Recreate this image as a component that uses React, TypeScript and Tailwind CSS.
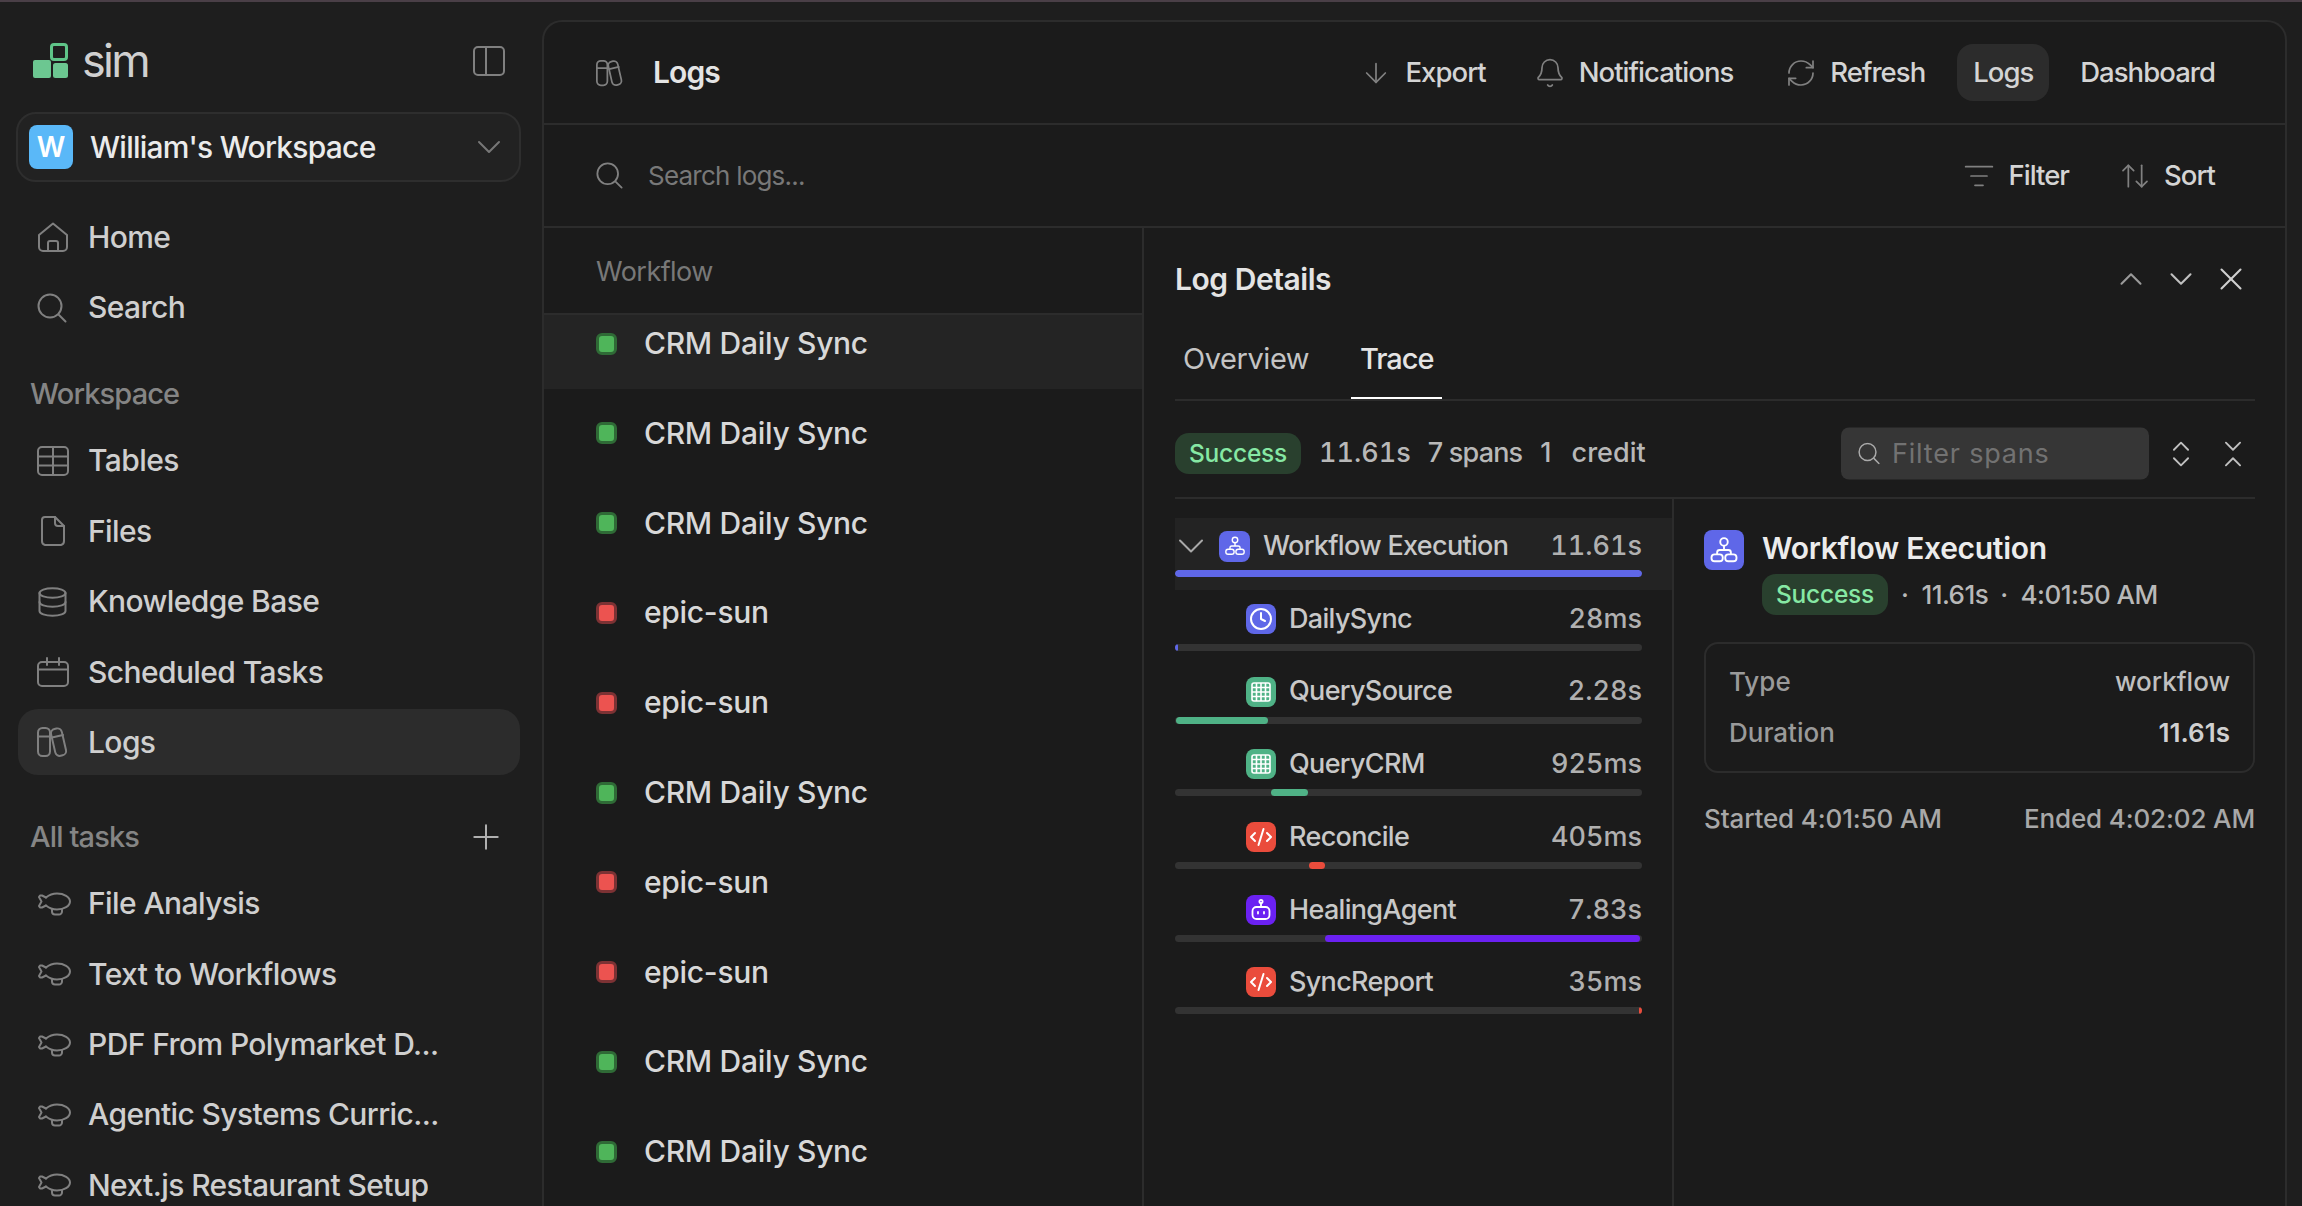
import {
  ArrowDown,
  ArrowUpDown,
  Bell,
  ChevronDown,
  ChevronUp,
  ChevronsDownUp,
  ChevronsUpDown,
  Clock,
  CodeXml,
  ListFilter,
  Plus,
  RefreshCw,
  X,
} from 'lucide-react';
import type { ReactNode } from 'react';

function Logo() {
  return (
    <svg width="35" height="35" viewBox="0 0 35 35" className="shrink-0">
      <rect x="0" y="17" width="18" height="18" rx="2" fill="#6cc791" />
      <rect x="20" y="20" width="15" height="15" rx="2.5" fill="#6cc791" />
      <rect x="18.5" y="1.5" width="15" height="15" rx="2.5" fill="none" stroke="#5fc488" strokeWidth="3" />
    </svg>
  );
}

const lineIcon = { fill: 'none', stroke: '#808080', strokeWidth: 2, strokeLinecap: 'round', strokeLinejoin: 'round' } as const;

function PanelIcon() {
  return (
    <svg width="32" height="30" viewBox="0 0 32 30" {...lineIcon}>
      <rect x="1" y="1" width="30" height="28" rx="4" />
      <path d="M13 1v28" />
    </svg>
  );
}

function HomeIcon() {
  return (
    <svg width="32" height="30" viewBox="0 0 32 30" {...lineIcon}>
      <path d="M2 13 16 1.5 30 13v12a4 4 0 0 1-4 4H6a4 4 0 0 1-4-4Z" />
      <path d="M11 29v-8a2 2 0 0 1 2-2h6a2 2 0 0 1 2 2v8" />
    </svg>
  );
}

function SearchIcon({ size = 30, color = '#808080' }: { size?: number; color?: string }) {
  return (
    <svg width={size} height={size} viewBox="0 0 30 30" {...lineIcon} stroke={color}>
      <circle cx="13" cy="13" r="11.5" />
      <path d="m22 22 6.5 6.5" />
    </svg>
  );
}

function TableIcon() {
  return (
    <svg width="32" height="30" viewBox="0 0 32 30" {...lineIcon}>
      <rect x="1" y="1" width="30" height="28" rx="4" />
      <path d="M16 1v28M1 10.5h30M1 19.5h30" />
    </svg>
  );
}

function FileIcon() {
  return (
    <svg width="32" height="30" viewBox="0 0 32 30" {...lineIcon}>
      <path d="M8 1h10l9 9v15a4 4 0 0 1-3 4H8a4 4 0 0 1-3-4V4a3 3 0 0 1 3-3Z" />
      <path d="M18 1v6a3 3 0 0 0 3 3h6" />
    </svg>
  );
}

function DatabaseIcon() {
  return (
    <svg width="32" height="30" viewBox="0 0 32 30" {...lineIcon}>
      <ellipse cx="15.5" cy="6" rx="13" ry="4.8" />
      <path d="M2.5 6v18c0 2.7 5.8 4.8 13 4.8s13-2.1 13-4.8V6" />
      <path d="M2.5 15c0 2.7 5.8 4.8 13 4.8s13-2.1 13-4.8" />
    </svg>
  );
}

function CalendarIcon() {
  return (
    <svg width="32" height="30" viewBox="0 0 32 30" {...lineIcon}>
      <rect x="1" y="5" width="30" height="24" rx="4" />
      <path d="M1 12.5h30M10 1v7M22 1v7" />
    </svg>
  );
}

function LogsIcon({ size = 32 }: { size?: number }) {
  return (
    <svg width={size} height={size} viewBox="0 0 32 32" {...lineIcon}>
      <rect x="1" y="2" width="12" height="28" rx="4.5" />
      <path d="M1 10.5h12" />
      <rect x="16" y="2.5" width="11" height="27.5" rx="4.5" transform="rotate(-13 21 16)" />
      <path d="M15 11.5l11-2.5" />
    </svg>
  );
}

function AirshipIcon() {
  return (
    <svg width="34" height="24" viewBox="0 0 34 24" {...lineIcon}>
      <path d="M9 5.5C12 3 16 1.5 20 1.5c7 0 13 3.5 13 8s-6 8-13 8c-4 0-8-1.500-11-4" />
      <path d="M9 5.500 5 3.500H3L2 5l2.500 4.500L2 14l1 1.500h2l4-2" />
      <path d="M15 17.500v2a3 3 0 0 0 3 3h4a3 3 0 0 0 3-3v-2" />
    </svg>
  );
}

function WorkflowGlyph({ size }: { size: number }) {
  return (
    <svg width={size} height={size} viewBox="0 0 24 24" fill="none" stroke="currentColor" strokeWidth="1.5">
      <circle cx="12" cy="5.500" r="3" />
      <path d="M12 8.500v3.500M6.500 15.500V14a2 2 0 0 1 2-2h7a2 2 0 0 1 2 2v1.500" />
      <rect x="2" y="15.500" width="9" height="5.500" rx="2.500" />
      <rect x="13" y="15.500" width="9" height="5.500" rx="2.500" />
    </svg>
  );
}

function TableGlyph() {
  return (
    <svg width="24" height="24" viewBox="0 0 24 24" fill="none" stroke="currentColor" strokeWidth="1.6">
      <rect x="3" y="3" width="18" height="18" rx="2" />
      <path d="M7.500 3v18M12 3v18M16.500 3v18M3 7.500h18M3 12h18M3 16.500h18" />
    </svg>
  );
}

function BotGlyph() {
  return (
    <svg width="24" height="24" viewBox="0 0 24 24" fill="none" stroke="currentColor" strokeWidth="1.8" strokeLinecap="round">
      <circle cx="12" cy="3.500" r="1.600" />
      <path d="M12 5.200V9" />
      <rect x="3.500" y="9" width="17" height="12" rx="4" />
      <path d="M9 14v1.500M15 14v1.500" />
    </svg>
  );
}

function NavRow({ icon, label, active }: { icon: ReactNode; label: string; active?: boolean }) {
  return (
    <div
      className={`ml-[18px] mr-[22px] my-[2.2px] flex h-[66px] shrink-0 items-center rounded-[20px] pl-[19px] ${active ? 'bg-[#2c2c2c]' : ''}`}
    >
      <span className="flex w-[51px] shrink-0 items-center">{icon}</span>
      <span className="truncate text-[30px] font-medium tracking-[-0.02em] text-[#cfcfcf]">{label}</span>
    </div>
  );
}

function SectionLabel({ children }: { children: ReactNode }) {
  return <span className="text-[29px] font-medium tracking-[-0.03em] text-[#858585]">{children}</span>;
}

const navIcon = 'text-[#808080]';

const logRows = [
  { name: 'CRM Daily Sync', ok: true },
  { name: 'CRM Daily Sync', ok: true },
  { name: 'CRM Daily Sync', ok: true },
  { name: 'epic-sun', ok: false },
  { name: 'epic-sun', ok: false },
  { name: 'CRM Daily Sync', ok: true },
  { name: 'epic-sun', ok: false },
  { name: 'epic-sun', ok: false },
  { name: 'CRM Daily Sync', ok: true },
  { name: 'CRM Daily Sync', ok: true },
];

function StatusDot({ ok }: { ok: boolean }) {
  return (
    <span
      className={`h-[22px] w-[21px] shrink-0 rounded-[6px] border-[3px] ${
        ok ? 'border-[#2f6a36] bg-[#4fb55a]' : 'border-[#7c3234] bg-[#ec5350]'
      }`}
    />
  );
}

const actionText = 'text-[27.5px] font-medium tracking-[-0.035em] text-[#d4d4d4]';

function HeaderAction({ icon, label }: { icon: ReactNode; label: string }) {
  return (
    <div className="flex items-center gap-[13px]">
      {icon}
      <span className={actionText}>{label}</span>
    </div>
  );
}

function SuccessPill() {
  return (
    <span className="flex h-[41px] w-[126px] shrink-0 items-center justify-center rounded-[14px] bg-[#29402e] text-[24.5px] font-medium tracking-[-0.01em] text-[#86e8a4]">
      Success
    </span>
  );
}

function SpanIcon({ color, children, size = 31 }: { color: string; children: ReactNode; size?: number }) {
  return (
    <span
      className="flex shrink-0 items-center justify-center rounded-[8px] text-white"
      style={{ backgroundColor: color, width: size, height: size }}
    >
      {children}
    </span>
  );
}

const spans = [
  { name: 'DailySync', time: '28ms', color: '#5f67e8', left: 0, width: 0.6, icon: <Clock size={24} strokeWidth={2} /> },
  { name: 'QuerySource', time: '2.28s', color: '#4fb286', left: 0.3, width: 19.6, icon: <TableGlyph /> },
  { name: 'QueryCRM', time: '925ms', color: '#4fb286', left: 20.6, width: 7.9, icon: <TableGlyph /> },
  { name: 'Reconcile', time: '405ms', color: '#ea4c3c', left: 28.7, width: 3.4, icon: <CodeXml size={24} strokeWidth={2} /> },
  { name: 'HealingAgent', time: '7.83s', color: '#6b21f2', left: 32.1, width: 67.4, icon: <BotGlyph /> },
  { name: 'SyncReport', time: '35ms', color: '#ea4c3c', left: 99.4, width: 0.6, icon: <CodeXml size={24} strokeWidth={2} /> },
];

function TraceBar({ color, left, width }: { color: string; left: number; width: number }) {
  return (
    <div className="h-[7px] w-[467px] overflow-hidden rounded-full bg-[#333333]">
      <div className="h-full rounded-full" style={{ backgroundColor: color, marginLeft: `${left}%`, width: `${width}%` }} />
    </div>
  );
}

const durationText = 'ml-auto text-[27px] font-medium tabular-nums text-[#b0b0b0]';
const spanName = 'text-[27px] font-medium tracking-[-0.025em] text-[#c8c8c8]';

export default function App() {
  return (
    <div className="flex h-[1206px] flex-col overflow-hidden bg-[#1e1e1e] [font-family:Inter,sans-serif]">
      <div className="h-[2px] shrink-0 bg-[#4a3f47]" />
      <div className="flex min-h-0 flex-1">
        <aside className="flex w-[542px] shrink-0 flex-col overflow-hidden">
          <div className="flex h-[110px] shrink-0 items-center pb-[2px] pl-[33px] pr-[37px] pt-[9px]">
            <Logo />
            <span className="ml-[14px] text-[45px] leading-none tracking-[-0.06em] text-[#d0d0d0]">sim</span>
            <span className="ml-auto">
              <PanelIcon />
            </span>
          </div>
          <div className="ml-[16px] mr-[21px] flex h-[70px] shrink-0 items-center rounded-[20px] border-2 border-[#2e2e2e] bg-[#222222] pl-[11px] pr-[10px]">
            <span className="flex h-[44px] w-[44px] items-center justify-center rounded-[8px] bg-[#5ab8f8] text-[28px] font-semibold text-white">
              W
            </span>
            <span className="ml-[17px] text-[30px] font-medium tracking-[-0.025em] text-[#ebebeb]">William's Workspace</span>
            <ChevronDown className="ml-auto text-[#777777]" size={40} strokeWidth={1.2} />
          </div>
          <div className="mt-[20px] flex shrink-0 flex-col">
            <NavRow icon={<HomeIcon />} label="Home" />
            <NavRow icon={<SearchIcon />} label="Search" />
          </div>
          <div className="flex h-[83px] shrink-0 items-center pl-[30px] pt-[18px]">
            <SectionLabel>Workspace</SectionLabel>
          </div>
          <div className="flex shrink-0 flex-col">
            <NavRow icon={<TableIcon />} label="Tables" />
            <NavRow icon={<FileIcon />} label="Files" />
            <NavRow icon={<DatabaseIcon />} label="Knowledge Base" />
            <NavRow icon={<CalendarIcon />} label="Scheduled Tasks" />
            <NavRow icon={<LogsIcon />} label="Logs" active />
          </div>
          <div className="flex h-[91px] shrink-0 items-center pl-[30px] pr-[36px] pt-[27px]">
            <SectionLabel>All tasks</SectionLabel>
            <Plus className="ml-auto text-[#b0b0b0]" size={40} strokeWidth={1.2} />
          </div>
          <div className="flex shrink-0 flex-col">
            <NavRow icon={<AirshipIcon />} label="File Analysis" />
            <NavRow icon={<AirshipIcon />} label="Text to Workflows" />
            <NavRow icon={<AirshipIcon />} label="PDF From Polymarket D..." />
            <NavRow icon={<AirshipIcon />} label="Agentic Systems Curric..." />
            <NavRow icon={<AirshipIcon />} label="Next.js Restaurant Setup" />
          </div>
        </aside>

        <main className="mr-[15px] mt-[18px] flex min-w-0 flex-1 flex-col overflow-hidden rounded-t-[20px] border-x-2 border-t-2 border-[#2c2c2c] bg-[#1b1b1b]">
          <header className="flex h-[103px] shrink-0 items-center border-b-2 border-[#2c2c2c] pl-[52px] pr-[70px]">
            <LogsIcon size={28} />
            <span className="ml-[29px] text-[30px] font-semibold tracking-[-0.03em] text-[#e4e4e4]">Logs</span>
            <div className="ml-auto flex items-center">
              <HeaderAction icon={<ArrowDown className={navIcon} size={32} strokeWidth={1.3} />} label="Export" />
              <div className="ml-[48px]">
                <HeaderAction icon={<Bell className={navIcon} size={32} strokeWidth={1.3} />} label="Notifications" />
              </div>
              <div className="ml-[52px]">
                <HeaderAction icon={<RefreshCw className={navIcon} size={32} strokeWidth={1.3} />} label="Refresh" />
              </div>
              <span className={`ml-[32px] flex h-[57px] w-[92px] items-center justify-center rounded-[16px] bg-[#2c2c2c] ${actionText}`}>
                Logs
              </span>
              <span className={`ml-[31px] ${actionText}`}>Dashboard</span>
            </div>
          </header>

          <div className="flex h-[103px] shrink-0 items-center border-b-2 border-[#2c2c2c] pl-[52px] pr-[70px]">
            <SearchIcon size={27} />
            <span className="ml-[25px] text-[26px] tracking-[-0.03em] text-[#787878]">Search logs...</span>
            <div className="ml-auto flex items-center gap-[50px]">
              <HeaderAction icon={<ListFilter className={navIcon} size={32} strokeWidth={1.3} />} label="Filter" />
              <HeaderAction icon={<ArrowUpDown className={navIcon} size={32} strokeWidth={1.3} />} label="Sort" />
            </div>
          </div>

          <div className="flex min-h-0 flex-1">
            <section className="flex w-[600px] shrink-0 flex-col border-r-2 border-[#2c2c2c]">
              <div className="flex h-[87px] shrink-0 items-center border-b-2 border-[#2c2c2c] pl-[52px] pt-[4px]">
                <span className="text-[27px] tracking-[-0.02em] text-[#787878]">Workflow</span>
              </div>
              {logRows.map((row, i) => (
                <div
                  key={i}
                  className={`flex shrink-0 items-center gap-[27px] pl-[52px] ${i === 0 ? 'h-[73.5px] bg-[#242424] pb-[16.5px]' : 'h-[89.8px]'}`}
                >
                  <StatusDot ok={row.ok} />
                  <span className="text-[30px] font-medium tracking-[-0.01em] text-[#d8d8d8]">{row.name}</span>
                </div>
              ))}
            </section>

            <section className="flex min-w-0 flex-1 flex-col pl-[31px] pr-[30px]">
              <div className="flex h-[105px] shrink-0 items-center pb-[5px] pt-[2px]">
                <span className="text-[30px] font-semibold tracking-[-0.015em] text-[#e4e4e4]">Log Details</span>
                <div className="ml-auto flex items-center gap-[12px] pr-[5px]">
                  <ChevronUp className="text-[#9a9a9a]" size={38} strokeWidth={1.3} />
                  <ChevronDown className="text-[#c0c0c0]" size={38} strokeWidth={1.3} />
                  <X className="text-[#d0d0d0]" size={38} strokeWidth={1.3} />
                </div>
              </div>
              <div className="flex h-[68px] shrink-0 items-stretch gap-[42px] border-b-2 border-[#2c2c2c] pl-[8px]">
                <span className="flex items-center pb-[14px] text-[29px] tracking-[-0.015em] text-[#c4c4c4]">Overview</span>
                <span className="flex w-[91px] items-center justify-center border-b-[2px] border-white pb-[12px] text-[29px] font-medium tracking-[-0.035em] text-[#e4e4e4]">
                  Trace
                </span>
              </div>
              <div className="flex h-[98px] shrink-0 items-center border-b-2 border-[#2c2c2c] pt-[9px]">
                <SuccessPill />
                <span className="ml-[18px] text-[27px] font-medium tabular-nums text-[#b8b8b8]">11.61s</span>
                <span className="ml-[17px] text-[27px] font-medium tracking-[-0.03em] text-[#b8b8b8]">7 spans</span>
                <span className="ml-[18px] text-[27px] font-medium text-[#b8b8b8]">1</span>
                <span className="ml-[20px] text-[27px] font-medium text-[#b8b8b8]">credit</span>
                <div className="ml-auto -mt-[9px] flex h-[52px] w-[308px] translate-y-[4.5px] items-center rounded-[8px] bg-[#363636] pl-[17px]">
                  <SearchIcon size={22} color="#aaaaaa" />
                  <span className="ml-[12px] text-[27px] tracking-[0.03em] text-[#727272]">Filter spans</span>
                </div>
                <ChevronsUpDown className="ml-[15px] text-[#c0c0c0]" size={34} strokeWidth={1.3} />
                <ChevronsDownUp className="ml-[18px] mr-[5px] text-[#c0c0c0]" size={34} strokeWidth={1.3} />
              </div>

              <div className="flex min-h-0 flex-1">
                <div className="flex w-[499px] shrink-0 flex-col border-r-2 border-[#2c2c2c] pt-[19px]">
                  <div className="h-[72px] shrink-0 bg-[#232323]">
                    <div className="flex h-[52px] items-center pr-[30px] pt-[4px]">
                      <ChevronDown className="-ml-[6px] text-[#a8a8a8]" size={44} strokeWidth={1.1} />
                      <span className="ml-[6px]">
                        <SpanIcon color="#5f67e8">
                          <WorkflowGlyph size={22} />
                        </SpanIcon>
                      </span>
                      <span className={`ml-[13px] ${spanName}`}>Workflow Execution</span>
                      <span className={durationText}>11.61s</span>
                    </div>
                    <TraceBar color="#5f67e8" left={0} width={100} />
                  </div>
                  {spans.map((s) => (
                    <div key={s.name} className="flex h-[72.7px] shrink-0 flex-col justify-start pt-[13px]">
                      <div className="flex h-[32px] items-center pl-[71px] pr-[30px]">
                        <SpanIcon color={s.color} size={30}>
                          {s.icon}
                        </SpanIcon>
                        <span className={`ml-[13px] ${spanName}`}>{s.name}</span>
                        <span className={durationText}>{s.time}</span>
                      </div>
                      <div className="mt-[9px]">
                        <TraceBar color={s.color} left={s.left} width={s.width} />
                      </div>
                    </div>
                  ))}
                </div>

                <div className="flex min-w-0 flex-1 flex-col pl-[30px] pt-[31px]">
                  <div className="flex shrink-0 gap-[18px]">
                    <SpanIcon color="#5f67e8" size={40}>
                      <WorkflowGlyph size={30} />
                    </SpanIcon>
                    <div className="flex flex-col">
                      <span className="h-[44px] text-[30px] font-semibold leading-[36px] tracking-[-0.01em] text-[#ececec]">
                        Workflow Execution
                      </span>
                      <div className="flex items-center text-[26px] font-medium tracking-[-0.02em] text-[#b8b8b8]">
                        <SuccessPill />
                        <span className="ml-[13px]">·</span>
                        <span className="ml-[13px]">11.61s</span>
                        <span className="ml-[12px]">·</span>
                        <span className="ml-[13px]">4:01:50 AM</span>
                      </div>
                    </div>
                  </div>
                  <div className="mt-[27px] flex h-[131px] shrink-0 flex-col justify-center gap-[21px] rounded-[14px] border-2 border-[#2c2c2c] px-[23px]">
                    <div className="flex items-center justify-between text-[26px] leading-[30px]">
                      <span className="font-medium text-[#9a9a9a]">Type</span>
                      <span className="font-medium text-[#c0c0c0]">workflow</span>
                    </div>
                    <div className="flex items-center justify-between text-[26px] leading-[30px]">
                      <span className="font-medium text-[#9a9a9a]">Duration</span>
                      <span className="font-semibold text-[#d0d0d0]">11.61s</span>
                    </div>
                  </div>
                  <div className="mt-[26px] flex items-center justify-between text-[26px] font-medium tracking-[-0.005em] text-[#a8a8a8]">
                    <span>Started 4:01:50 AM</span>
                    <span>Ended 4:02:02 AM</span>
                  </div>
                </div>
              </div>
            </section>
          </div>
        </main>
      </div>
    </div>
  );
}
